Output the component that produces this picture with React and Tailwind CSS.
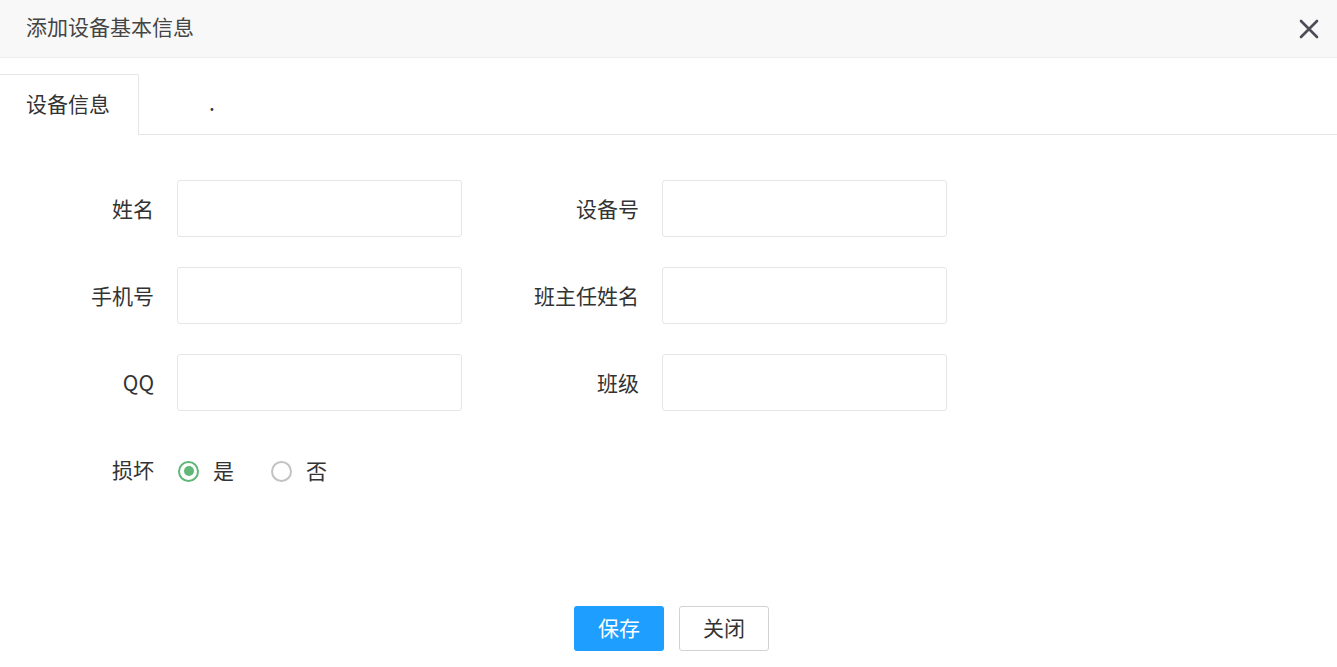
import React, { useState } from "react";

const font = { fontFamily: '"Noto Sans CJK SC", "Liberation Sans", sans-serif' };

const Field = ({ label }) => (
  <div className="flex items-center">
    <label className="w-[154px] text-right text-[21px] text-[#333]">{label}</label>
    <input
      type="text"
      className="ml-[23px] h-[57px] w-[285px] rounded-[3px] border border-[#e6e6e6] bg-white px-3 text-[21px] outline-none"
    />
  </div>
);

const Radio = ({ checked, label, onClick }) => (
  <button type="button" onClick={onClick} className="flex items-center">
    <span
      className={`flex h-[21px] w-[21px] items-center justify-center rounded-full border-2 ${
        checked ? "border-[#5fb878]" : "border-[#c2c2c2]"
      }`}
    >
      {checked && <span className="h-[10px] w-[10px] rounded-full bg-[#5fb878]" />}
    </span>
    <span className="ml-[14px] text-[21px] text-[#333]">{label}</span>
  </button>
);

export default function App() {
  const [broken, setBroken] = useState(true);

  return (
    <div className="h-[667px] w-full overflow-hidden bg-white" style={font}>
      <header className="flex h-[58px] items-center justify-between border-b border-[#eee] bg-[#f8f8f8] pb-[4px] pl-[26px] pr-[17px]">
        <h1 className="text-[21px] text-[#444]">添加设备基本信息</h1>
        <svg width="22" height="22" viewBox="0 0 22 22" className="mt-[4px] text-[#4d4d57]">
          <path d="M3 3 L19 19 M19 3 L3 19" stroke="currentColor" strokeWidth="2.6" strokeLinecap="round" />
        </svg>
      </header>

      <div className="mt-[16px] flex h-[61px] items-end border-b border-[#e6e6e6]">
        <div className="relative -mb-px flex h-[61px] w-[139px] items-center rounded-tr-[2px] border-r border-t border-[#e6e6e6] bg-white pb-[3px] pl-[26px] text-[21px] text-[#333]">
          设备信息
        </div>
        <div className="flex h-[60px] items-center pb-[3px] pl-[70px] text-[21px] text-[#333]">.</div>
      </div>

      <form className="pt-[45px]">
        <div className="grid w-[947px] grid-cols-[462px_462px] gap-x-[23px] gap-y-[30px]">
          <Field label="姓名" />
          <Field label="设备号" />
          <Field label="手机号" />
          <Field label="班主任姓名" />
          <Field label="QQ" />
          <Field label="班级" />
        </div>

        <div className="mt-[42px] flex h-[36px] items-center">
          <span className="w-[154px] pb-[2px] text-right text-[21px] text-[#333]">损坏</span>
          <div className="ml-[24px] flex items-center gap-[37px]">
            <Radio checked={broken} label="是" onClick={() => setBroken(true)} />
            <Radio checked={!broken} label="否" onClick={() => setBroken(false)} />
          </div>
        </div>

        <div className="mt-[117px] flex justify-center gap-[15px] pl-[6px]">
          <button type="button" className="h-[45px] w-[90px] rounded-[3px] bg-[#1e9fff] pb-[2px] text-[21px] text-white">
            保存
          </button>
          <button type="button" className="h-[45px] w-[90px] rounded-[3px] border border-[#d2d2d2] bg-white pb-[2px] text-[21px] text-[#333]">
            关闭
          </button>
        </div>
      </form>
    </div>
  );
}
